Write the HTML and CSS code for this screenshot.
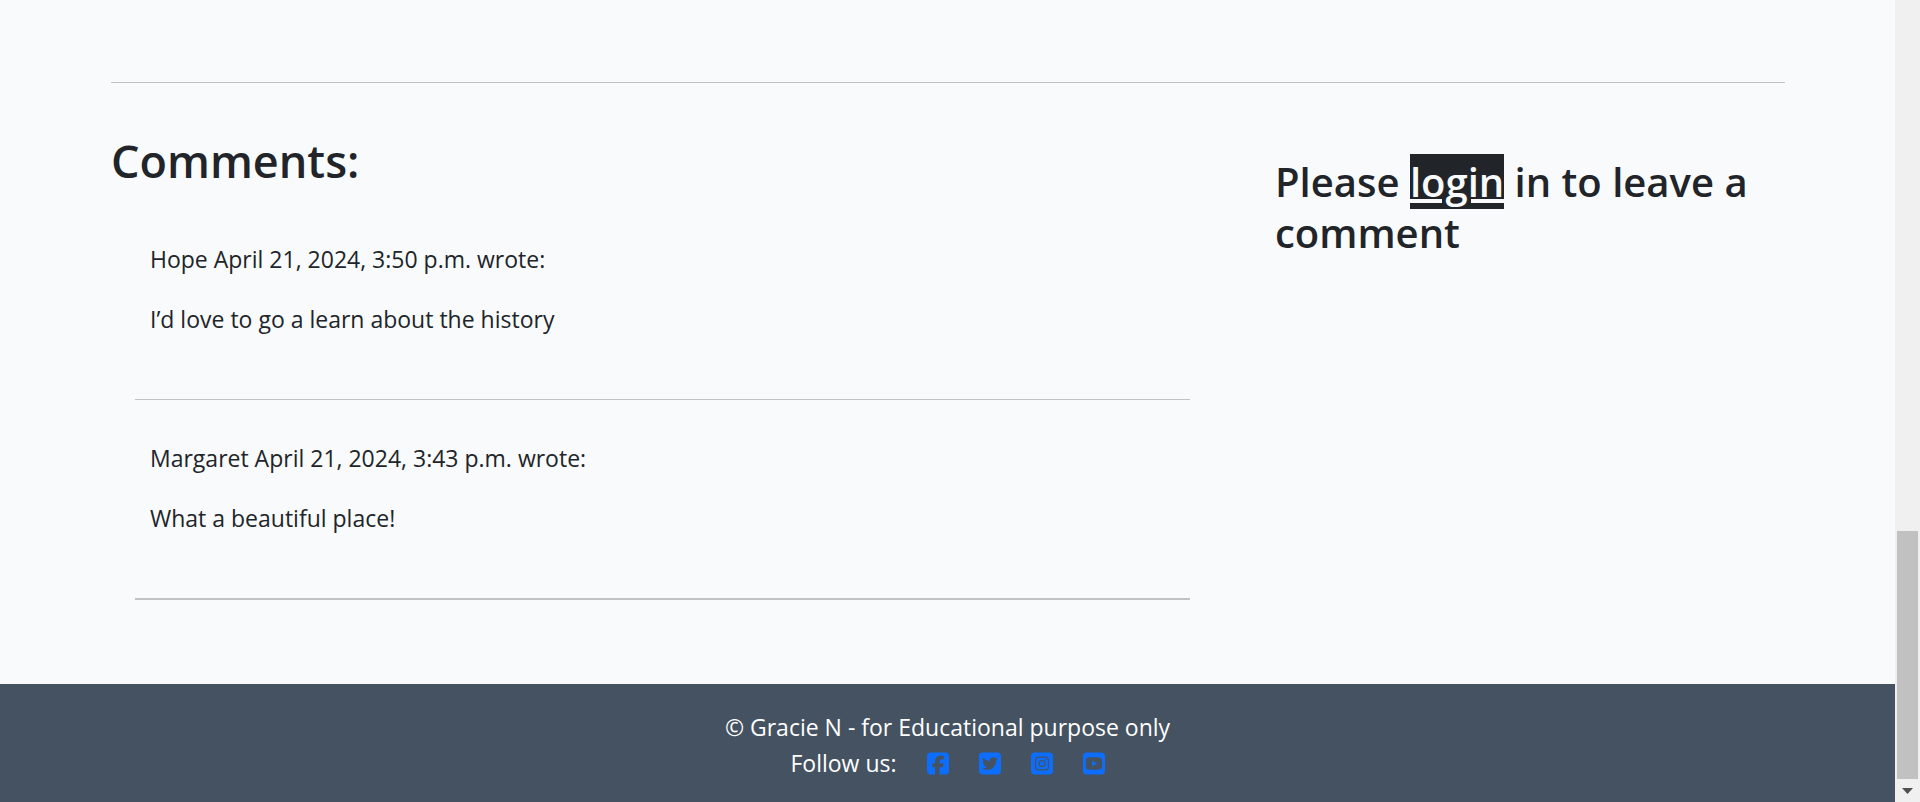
FILE: index.html
```html
<!DOCTYPE html>
<html lang="en">
<head>
<meta charset="utf-8">
<title>Comments</title>
<link rel="stylesheet" href="styles.css">
</head>
<body>
<div class="window">
  <div class="page">
    <main class="content">
      <hr class="rule">
      <div class="columns">
        <section class="comments">
          <h3 class="comments-title">Comments:</h3>
          <div class="comment-list">
            <article class="comment">
              <p class="comment-text">Hope April 21, 2024, 3:50 p.m. wrote:</p>
              <p class="comment-text">I’d love to go a learn about the history</p>
            </article>
            <hr class="rule">
            <article class="comment">
              <p class="comment-text">Margaret April 21, 2024, 3:43 p.m. wrote:</p>
              <p class="comment-text">What a beautiful place!</p>
            </article>
            <hr class="rule rule-end">
          </div>
        </section>
        <aside class="prompt">
          <h4 class="prompt-title">Please <a class="login" href="#login">login</a> in to leave a comment</h4>
        </aside>
      </div>
    </main>
    <footer class="footer">
      <p class="footer-line">© Gracie N - for Educational purpose only</p>
      <div class="footer-line follow">
        <span>Follow us:</span>
        <a class="social" href="#facebook" aria-label="Facebook"><svg viewBox="0 0 448 512"><path d="M64 32C28.700 32 0 60.700 0 96V416c0 35.300 28.700 64 64 64h98.200V334.200H109.400V256h52.800V222.300c0-87.100 39.400-127.500 125-127.500c16.200 0 44.200 3.200 55.700 6.400V172c-6-.6-16.500-1-29.600-1c-42 0-58.200 15.900-58.200 57.200V256h83.600l-14.400 78.200H255V480H384c35.300 0 64-28.700 64-64V96c0-35.300-28.700-64-64-64H64z"/></svg></a>
        <a class="social" href="#twitter" aria-label="Twitter"><svg viewBox="0 0 448 512"><path d="M64 32C28.700 32 0 60.700 0 96V416c0 35.300 28.700 64 64 64H384c35.300 0 64-28.700 64-64V96c0-35.300-28.700-64-64-64H64zM351.300 199.300v0c0 86.700-66 186.600-186.600 186.600c-37.200 0-71.700-10.800-100.700-29.400c5.300 .6 10.400 .8 15.800 .8c30.700 0 58.900-10.400 81.400-28c-28.800-.6-53-19.500-61.300-45.500c10.100 1.500 19.200 1.500 29.600-1.200c-30-6.100-52.500-32.500-52.500-64.400v-.8c8.700 4.900 18.900 7.900 29.600 8.300c-9-6-16.400-14.100-21.500-23.600s-7.800-20.200-7.700-31c0-12.200 3.200-23.400 8.900-33.100c32.300 39.800 80.800 65.800 135.200 68.600c-9.300-44.500 24-80.600 64-80.600c18.900 0 35.900 7.900 47.900 20.700c14.800-2.800 29-8.300 41.600-15.800c-4.900 15.200-15.200 28-28.800 36.100c13.200-1.400 26-5.100 37.800-10.200c-8.900 13.100-20.100 24.700-32.900 34c.2 2.800 .2 5.700 .2 8.500z"/></svg></a>
        <a class="social" href="#instagram" aria-label="Instagram"><svg viewBox="0 0 448 512"><path fill-rule="evenodd" d="M64 32H384c35.300 0 64 28.700 64 64V416c0 35.300-28.700 64-64 64H64c-35.300 0-64-28.700-64-64V96c0-35.300 28.700-64 64-64zM160 112a80 80 0 0 0-80 80V320a80 80 0 0 0 80 80H288a80 80 0 0 0 80-80V192a80 80 0 0 0-80-80zM160 136H288a56 56 0 0 1 56 56V320a56 56 0 0 1-56 56H160a56 56 0 0 1-56-56V192a56 56 0 0 1 56-56zM224 182a74 74 0 1 0 0 148a74 74 0 1 0 0-148zM224 208a48 48 0 1 1 0 96a48 48 0 1 1 0-96zM301 162a17 17 0 1 0 0 34a17 17 0 1 0 0-34z"/></svg></a>
        <a class="social" href="#youtube" aria-label="YouTube"><svg viewBox="0 0 448 512"><path fill-rule="evenodd" d="M64 32H384c35.300 0 64 28.700 64 64V416c0 35.300-28.700 64-64 64H64c-35.300 0-64-28.700-64-64V96c0-35.300 28.700-64 64-64zM224 128c-60 0-110 1-133 8c-14 4-25 15-28 29c-9 40-9 142 0 182c3 14 14 25 28 29c23 7 73 8 133 8s110-1 133-8c14-4 25-15 28-29c9-40 9-142 0-182c-3-14-14-25-28-29c-23-7-73-8-133-8zM186 198L282 256L186 314z"/></svg></a>
      </div>
    </footer>
  </div>
  <div class="scrollbar">
    <div class="thumb"></div>
    <svg class="arrow" viewBox="0 0 11 6"><path d="M0 0H11L5.500 6z"/></svg>
  </div>
</div>
</body>
</html>
```
FILE: styles.css
```css
* {
  box-sizing: border-box;
}

body {
  margin: 0;
  background: #f9fafc;
  color: #212529;
  font-family: "Segoe UI", "Open Sans", "Noto Sans", sans-serif;
  font-size: 23px;
  line-height: 36px;
}

h3, h4, p {
  margin: 0;
}

.window {
  display: flex;
  min-height: 100vh;
}

.page {
  flex: 1;
  display: flex;
  flex-direction: column;
}

.content {
  flex: 1;
  padding: 82px 110px 0 111px;
}

.rule {
  height: 1px;
  margin: 0;
  border: 0;
  background: #c1c2c4;
}

.rule-end {
  height: 2px;
}

.columns {
  display: grid;
  grid-template-columns: 1079fr 510fr;
  gap: 85px;
}

.comments-title {
  padding-top: 51px;
  font-size: 45px;
  font-weight: 600;
  line-height: 54px;
}

.comment-list {
  padding: 35px 0 83px 24px;
}

.comment {
  display: grid;
  gap: 24px;
  padding: 40px 15px 62px;
}

.comment:first-child {
  padding-top: 18px;
}

.prompt {
  padding-top: 73px;
}

.prompt-title {
  font-size: 40px;
  font-weight: 600;
  line-height: 51px;
}

.login {
  background: #212529;
  color: #f9fafc;
  text-decoration-thickness: 4px;
}

.footer {
  padding: 25px 0 21px;
  background: #445261;
  color: #fff;
  text-align: center;
}

.follow {
  display: flex;
  justify-content: center;
  align-items: center;
}

.social {
  display: flex;
  margin-left: 30px;
}

.social svg {
  width: 22px;
  height: 25px;
  fill: #0d6efd;
}

.scrollbar {
  display: flex;
  flex-direction: column;
  justify-content: flex-end;
  align-items: center;
  gap: 9px;
  width: 25px;
  padding-bottom: 8px;
  background: #f0f0f0;
}

.thumb {
  width: 21px;
  height: 248px;
  background: #c1c1c1;
}

.arrow {
  width: 11px;
  height: 6px;
  fill: #505050;
}
```
